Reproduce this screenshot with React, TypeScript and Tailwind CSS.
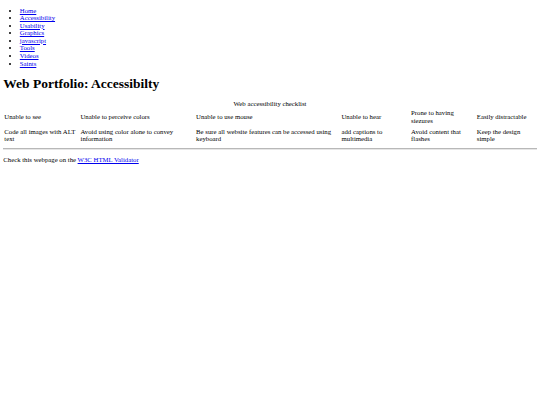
const navLinks = ['Home', 'Accessibility', 'Usability', 'Graphics', 'javascript', 'Tools', 'Videos', 'Saints'];

const checklist = [
  { need: 'Unable to see', tip: 'Code all images with ALT text' },
  { need: 'Unable to perceive colors', tip: 'Avoid using color alone to convey information' },
  { need: 'Unable to use mouse', tip: 'Be sure all website features can be accessed using keyboard' },
  { need: 'Unable to hear', tip: 'add captions to multimedia' },
  { need: 'Prone to having siezures', tip: 'Avoid content that flashes' },
  { need: 'Easily distractable', tip: 'Keep the design simple' },
];

export default function App() {
  return (
    <div className="min-h-[405px] bg-white px-[3.3px] pt-[6.6px] text-[6.75px] leading-[1.15] text-black font-['Liberation_Serif',serif]">
      {/* Nav */}
      <ul className="list-disc pl-[16.5px] leading-[7.57px]">
        {navLinks.map((link) => (
          <li key={link}>
            <a href="#" className="text-[#0000ee] underline">
              {link}
            </a>
          </li>
        ))}
      </ul>

      <h1 className="mt-[8.8px] mb-[8.8px] text-[13.5px] font-bold leading-[15.2px]">Web Portfolio: Accessibilty</h1>

      {/* Checklist table */}
      <table className="w-full border-separate border-spacing-[0.8px]">
        <caption className="pb-[0.5px]">Web accessibility checklist</caption>
        <tbody>
          <tr>
            {checklist.map((c) => (
              <td key={c.need} className="px-[1px] py-[1.3px] align-middle">
                {c.need}
              </td>
            ))}
          </tr>
          <tr>
            {checklist.map((c) => (
              <td key={c.tip} className="px-[1px] py-[1.3px] align-middle">
                {c.tip}
              </td>
            ))}
          </tr>
        </tbody>
      </table>

      <hr className="my-[3.3px] border-0 border-t border-b border-t-[#b8b8b8] border-b-[#e6e6e6]" />

      <p className="mt-[6.6px]">
        Check this webpage on the{' '}
        <a href="#" className="text-[#0000ee] underline">
          W3C HTML Validator
        </a>
      </p>
    </div>
  );
}
